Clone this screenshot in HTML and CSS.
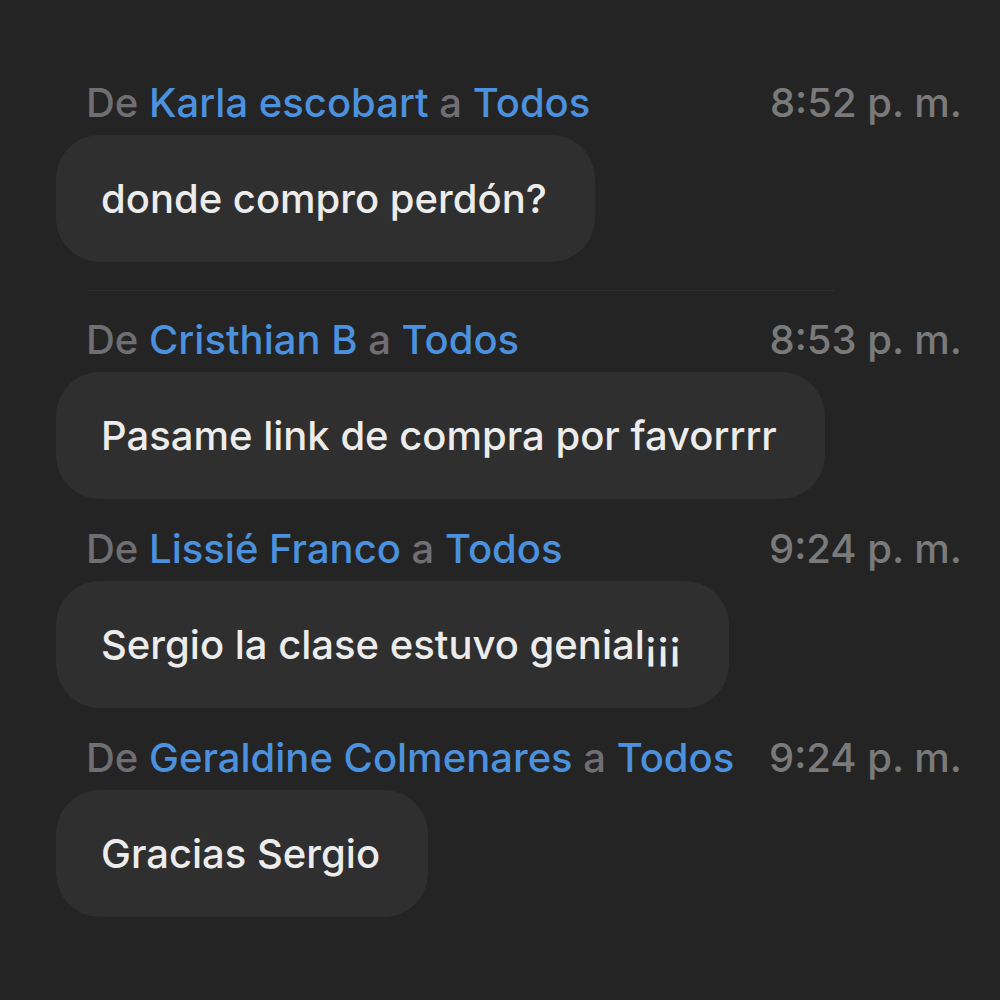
FILE: index.html
```html
<!DOCTYPE html>
<html lang="es">
<head>
    <meta charset="UTF-8">
    <title>Chat</title>
    <link rel="stylesheet" href="styles.css">
</head>
<body>
    <div class="chat">
        <div class="message">
            <div class="meta">
                <span class="from">De <span class="name">Karla escobart</span> a <span class="name">Todos</span></span>
                <span class="time">8:52 p. m.</span>
            </div>
            <div class="bubble">donde compro perdón?</div>
        </div>

        <div class="divider"></div>

        <div class="message">
            <div class="meta">
                <span class="from">De <span class="name">Cristhian B</span> a <span class="name">Todos</span></span>
                <span class="time">8:53 p. m.</span>
            </div>
            <div class="bubble">Pasame link de compra por favorrrr</div>
        </div>

        <div class="message">
            <div class="meta">
                <span class="from">De <span class="name">Lissié Franco</span> a <span class="name">Todos</span></span>
                <span class="time">9:24 p. m.</span>
            </div>
            <div class="bubble">Sergio la clase estuvo genial¡¡¡</div>
        </div>

        <div class="message">
            <div class="meta">
                <span class="from">De <span class="name">Geraldine Colmenares</span> a <span class="name">Todos</span></span>
                <span class="time">9:24 p. m.</span>
            </div>
            <div class="bubble">Gracias Sergio</div>
        </div>
    </div>
</body>
</html>
```

FILE: styles.css
```css
body {
    margin: 0;
    background-color: #242424;
    font-family: Inter, "Noto Sans", sans-serif;
    font-size: 40px;
    font-weight: 500;
    color: #ececec;
}
.chat {
    padding: 83px 38px 0 56px;
    display: flex;
    flex-direction: column;
    gap: 30px;
}
.message {
    display: flex;
    flex-direction: column;
    align-items: flex-start;
    gap: 12px;
}
.meta {
    align-self: stretch;
    display: flex;
    justify-content: space-between;
    line-height: 40px;
    padding-left: 30px;
}
.from {
    color: #6f6f73;
}
.name {
    color: #4b91de;
}
.time {
    color: #7a7a7a;
}
.bubble {
    background-color: #2f2f2f;
    border-radius: 44px;
    padding: 42px 48px 42px 45px;
    line-height: 43px;
}
.divider {
    height: 1px;
    background-color: #2e2e2e;
    margin: -2px 128px -1px 32px;
}
```
